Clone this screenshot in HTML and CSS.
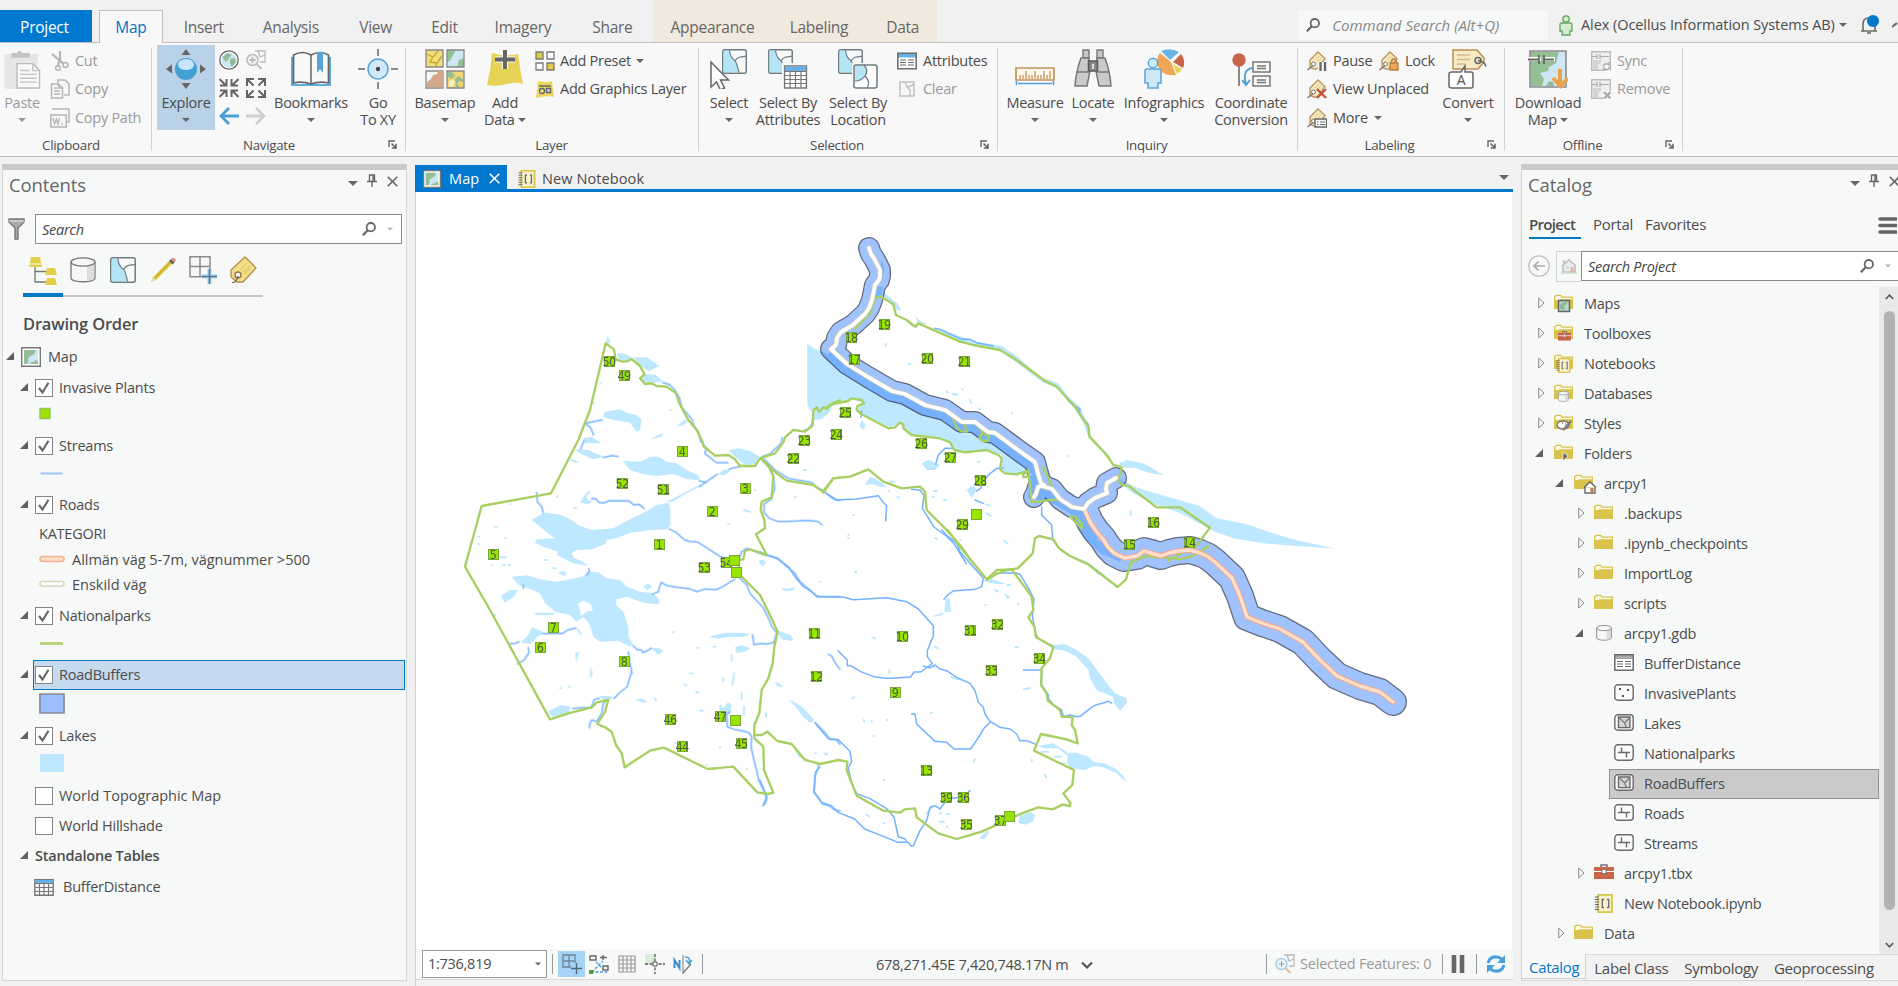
FILE: index.html
```html
<!DOCTYPE html>
<html lang="en">
<head>
<meta charset="utf-8">
<title>Map</title>
<link rel="stylesheet" href="styles.css">
</head>
<body>
<svg class="defs" aria-hidden="true">
  <symbol id="caret" viewBox="0 0 8 4"><path d="M0 0h8L4 4z" fill="currentColor"/></symbol>
  <symbol id="open" viewBox="0 0 8 8"><path d="M8 0v8H0z" fill="#5f5f5f"/></symbol>
  <symbol id="closed" viewBox="0 0 7 12"><path d="M.7 1v10L6 6z" fill="none" stroke="#8c8c8c"/></symbol>
  <symbol id="pin" viewBox="0 0 10 13"><path d="M2 1h6M2.500 1v6M7.500 1v6M6 1v6M0 7.500h10M5 8v5" fill="none" stroke="#666" stroke-width="1.400"/></symbol>
  <symbol id="close" viewBox="0 0 11 11"><path d="M.7.7l9.600 9.600M10.300.7L.7 10.300" fill="none" stroke="currentColor" stroke-width="1.600"/></symbol>
  <symbol id="mag" viewBox="0 0 14 14"><circle cx="8.800" cy="5.200" r="4.200" fill="none" stroke="#666" stroke-width="1.800"/><path d="M5.800 8.200L.8 13.200" stroke="#666" stroke-width="2.200"/></symbol>
  <symbol id="launch" viewBox="0 0 9 9"><path d="M1 7V1h6" fill="none" stroke="#666" stroke-width="1.400"/><path d="M3.500 3.500l4 4M8 3.800V8H3.800" fill="none" stroke="#666" stroke-width="1.600"/></symbol>
  <symbol id="folder" viewBox="0 0 19 16"><path d="M0 15V2.500L2 .7h5l1.500 1.800H19V15z" fill="#d9c34a"/><path d="M1.300 4.500V3l1.200-1h3.800l1.500 1.800h10v1.400H5.500L4.500 6H1.300z" fill="#fbf8e6"/></symbol>
  <symbol id="mapicon" viewBox="0 0 20 20"><path d="M.7.7h18.600v18.600H.7z" fill="#fff" stroke="#777" stroke-width="1.400"/><path d="M3 3h14v14H3z" fill="#cfe6f5"/><path d="M3 3h11.500l-1 4-3 1.500-3.500 2.500.5 3-1 3H3z" fill="#93bf95"/><path d="M8.500 17l2-2h3l.5-2 3 1v3z" fill="#93bf95"/></symbol>
  <symbol id="cyl" viewBox="0 0 26 26"><path d="M1 5v16c0 5 24 5 24 0V5" fill="#f7f7f7" stroke="#777" stroke-width="1.300"/><path d="M17 9v15c4-.5 7.300-1.500 7.300-3V5.500C24 7.500 20 8.500 17 9z" fill="#dcdcdc"/><ellipse cx="13" cy="5" rx="12" ry="4.200" fill="#f7f7f7" stroke="#777" stroke-width="1.300"/></symbol>
  <symbol id="poly" viewBox="0 0 26 26"><rect x=".8" y=".8" width="24.400" height="24.400" rx="2" fill="#f8f8f8" stroke="#6c7b80" stroke-width="1.500"/><path d="M1.700 1.700h6c1 4 .5 7 6 11 2 3 3 8 4 11.600h-16z" fill="#b3e5f7"/><path d="M7.700 1.500c1 4 .5 7 6 11 2 3 3 8 4 12M13.500 12.500C16 8 20 8 25 7.500" fill="none" stroke="#6c7b80" stroke-width="1.200"/></symbol>
  <symbol id="table" viewBox="0 0 24 24"><path d="M1 1h22v22H1z" fill="#fff" stroke="#777" stroke-width="1.600"/><path d="M1.500 1.500h21V6h-21z" fill="#69b1e2"/><path d="M1 6.500h22M1 10.500h22M1 14.500h22M1 18.500h22M6.500 6v17M12 6v17M17.500 6v17" stroke="#777" stroke-width="1.200"/></symbol>
  <symbol id="list" viewBox="0 0 20 17"><path d="M1 1h18v15H1z" fill="#fff"/><path d="M1 1h18v4H1z" class="head"/><path d="M.8.8h18.400v15.400H.8z" fill="none" stroke="#6b6b6b" stroke-width="1.500"/><path d="M3 7.500h6M3 10h6M3 12.500h6M11 7.500h6M11 10h6M11 12.500h6" stroke="#6b6b6b" stroke-width="1.200"/></symbol>
  <symbol id="fc" viewBox="0 0 20 17"><rect x=".8" y=".8" width="18.400" height="15.400" rx="3" fill="#fafafa" stroke="#6b6b6b" stroke-width="1.400"/></symbol>
  <symbol id="fcline" viewBox="0 0 20 17"><use href="#fc"/><path d="M4 8.500h12M7.500 3.500v5M12.500 8.500v5" fill="none" stroke="#6b6b6b" stroke-width="1.400"/></symbol>
  <symbol id="fcpoly" viewBox="0 0 20 17"><use href="#fc"/><path d="M4.500 3h11.500v10.700H4.500z" fill="#d5d5d5" stroke="#666" stroke-width="1.300"/><path d="M5.500 4l5 5 5-5M10.500 9l2 4.500" fill="none" stroke="#777" stroke-width="1.200"/></symbol>
  <symbol id="notebook" viewBox="0 0 18 19"><path d="M3 .8h14v17.400H3z" fill="#f8f0cc" stroke="#d9c34a" stroke-width="1.800"/><path d="M0 3h4M0 5.500h4M0 8h4M0 10.500h4M0 13h4M0 15.500h4" stroke="#666" stroke-width="1"/><path d="M9 5.500H7.300v8H9M12 5.500h1.700v8H12" fill="none" stroke="#666" stroke-width="1.300"/></symbol>
  <symbol id="toolbox" viewBox="0 0 20 16"><path d="M7 3V1h6v2" fill="none" stroke="#777" stroke-width="1.600"/><path d="M0 3h20v12H0z" fill="#c8644a"/><path d="M0 7.500h20" stroke="#fff"/><path d="M8 5.500h4v4H8z" fill="#fff" stroke="#777"/></symbol>
  <symbol id="check" viewBox="0 0 12 12"><path d="M1 6l3.500 4.500L10.500.8" fill="none" stroke="#666" stroke-width="2.100"/></symbol>
  <symbol id="tag" viewBox="0 0 20 20"><path d="M3 16.500V9L11 1l7 6.500-6 8.500-3.500 2.500z" fill="#f5e8bd" stroke="#bd9663" stroke-width="1.400"/><path d="M8.500 8.500l4-3.500M10 11l4-4" stroke="#dcc687"/><circle cx="6.500" cy="13" r="2" fill="#fff" stroke="#777"/><path d="M6 14.500L.5 19" stroke="#777" stroke-width="1.300"/></symbol>
  <symbol id="offmap" viewBox="0 0 20 20"><path d="M.7.7h18.600v18.600H.7z" fill="#eee" stroke="#bcbcbc" stroke-width="1.400"/><path d="M2 9h8v3l-3 2v4H2z" fill="#d4d4d4"/><path d="M0 5.500h6M6 3v5M9 3v5M9 5.500h9" fill="none" stroke="#aaa" stroke-width="1.200"/></symbol>
  <path id="road-north" d="M869 248l2 6 4 6 5 10v6l-1 4-4 5-3 15-3 8-4 6-12 11-12 7-4 6-1 7-5 4 16 15 21 13 24 14 13 3 20 11 20 5 17 12h13l13 10 7 1 23 17 17 12 4 15 3 9 10 3 8 10 12 8 12 2 4-6 7-5 12-5-1-4 1-6 9-5M1044 485l-6 2-2 7-2 3"/>
  <path id="road-main" d="M1085 511l5 11 6 9 7 8 5 8 6 6 10 5 13-2 7-5 7 2 10 3 8-3 9-2 12-1 10 3 7 3 8 6 17 16 8 18 7 21 15 6 18 6 23 13 17 18 17 16 23 10 20 6 13 10"/>
</svg>

<header class="tabs">
  <div class="tab project">Project</div>
  <div class="tab active">Map</div>
  <div class="tab w82">Insert</div><div class="tab w92">Analysis</div><div class="tab w78">View</div><div class="tab w60">Edit</div><div class="tab w97">Imagery</div><div class="tab w82">Share</div>
  <div class="context"><div class="tab w116">Appearance</div><div class="tab w100">Labeling</div><div class="tab w70">Data</div></div>
  <div class="command"><svg class="i14"><use href="#mag"/></svg><em>Command Search (Alt+Q)</em></div>
  <div class="account">
    <svg width="14" height="21" viewBox="0 0 14 21"><circle cx="7" cy="4" r="3.200" fill="#d5ecd0" stroke="#62a35f" stroke-width="1.300"/><path d="M1 9.500Q1 8 3 8h8q2 0 2 1.500V16h-2v4H3v-4H1z" fill="#d5ecd0" stroke="#62a35f" stroke-width="1.300"/></svg>
    <span>Alex (Ocellus Information Systems AB)</span><svg class="caret"><use href="#caret"/></svg>
    <svg class="bell" width="20" height="20" viewBox="0 0 20 20"><path d="M1 16h16M3 16V9q0-6 6-6t6 6v7M7 18h4" fill="none" stroke="#6a6a6a" stroke-width="1.600"/><circle cx="13" cy="6" r="6" fill="#0079c8"/></svg>
    <svg width="6" height="6" viewBox="0 0 6 6"><path d="M0 5l5-4" stroke="#666" stroke-width="2"/></svg>
  </div>
</header>

<section class="ribbon">
  <div class="group clipboard">
    <div class="body">
      <div class="big dim"><svg width="39" height="41" viewBox="0 0 39 41"><path d="M1 5h34v36H4q-3 0-3-3z" fill="#e6e6e6"/><path d="M8 4h6q2-5 5 0h8v5H8z" fill="#c4c4c4"/><path d="M14 15h16l7 7v18H14z" fill="#f8f8f8" stroke="#bdbdbd" stroke-width="1.500"/><path d="M30 15v7h7M17 22h10M17 26h17M17 30h17M17 34h17" fill="none" stroke="#c4c4c4" stroke-width="1.400"/></svg><b>Paste</b><svg class="caret"><use href="#caret"/></svg></div>
      <div class="rows dim">
        <div><svg class="i20" viewBox="0 0 20 20"><path d="M2 3l12 10M10 0v9L8 14" fill="none" stroke="#b5b5b5" stroke-width="2.200"/><circle cx="15.500" cy="14" r="2.500" fill="none" stroke="#b5b5b5" stroke-width="1.500"/><circle cx="8" cy="17" r="2.300" fill="none" stroke="#b5b5b5" stroke-width="1.500"/></svg>Cut</div>
        <div><svg class="i20" viewBox="0 0 20 20"><path d="M8 4V1h7l4 4v11h-5M1.500 5h7l4 4v10h-11z" fill="#f8f8f8" stroke="#b5b5b5" stroke-width="1.500"/><path d="M8.500 5v4h4M4 9h3M4 12h6M4 15h6" fill="none" stroke="#b5b5b5" stroke-width="1.300"/></svg>Copy</div>
        <div><svg class="i20" viewBox="0 0 20 20"><path d="M2 1h17v13h-3M.8 7h15.400v12H.8z" fill="#f8f8f8" stroke="#b5b5b5" stroke-width="1.500"/><path d="M3 10l1.500 6L6.500 11l1.500 5L9.500 10M12 15v2" fill="none" stroke="#b5b5b5" stroke-width="1.300"/></svg>Copy Path</div>
      </div>
    </div>
    <footer>Clipboard</footer>
  </div>
  <div class="group navigate">
    <div class="body">
      <div class="big selected"><svg width="40" height="40" viewBox="0 0 40 40"><circle cx="20" cy="20" r="11" fill="#459fd5"/><ellipse cx="20" cy="15.500" rx="8" ry="5.500" fill="#c9e6f8"/><path d="M15.500 6L20 0l4.500 6zM15.500 34l4.500 6 4.500-6zM6 15.500L0 20l6 4.500zM34 15.500l6 4.500-6 4.500z" fill="#666"/></svg><b>Explore</b><svg class="caret"><use href="#caret"/></svg></div>
      <div class="navgrid">
        <svg class="i20" viewBox="0 0 20 20"><circle cx="10" cy="10" r="9.200" fill="#fff" stroke="#666" stroke-width="1.300"/><circle cx="10" cy="10" r="7.500" fill="#cfe6f2"/><path d="M3.500 7l5-4 4 2-3 4-3 3zM11 9l5-1 1 4-4 5-2-4z" fill="#8fbc96"/></svg>
        <svg class="i20" viewBox="0 0 20 20"><path d="M9 1h10v11h-5M12 1l2 6 5-2" fill="none" stroke="#bbb" stroke-width="1.300"/><circle cx="6.500" cy="10" r="5.500" fill="#f2f2f2" stroke="#bbb" stroke-width="1.500"/><path d="M3.500 10h6M6.500 7v6M10.500 14l5 5" stroke="#bbb" stroke-width="1.800"/></svg>
        <svg class="i20" viewBox="0 0 20 20"><path d="M.5 1l6 6M7.500 1v6.500H1M19.500 1l-6 6M12.500 1v6.500H19M.5 19l6-6M7.500 19v-6.500H1M19.500 19l-6-6M12.500 19v-6.500H19" fill="none" stroke="#666" stroke-width="2"/></svg>
        <svg class="i20" viewBox="0 0 20 20"><path d="M1.500 1.500l6 6M1 8V1h7M18.500 1.500l-6 6M12 1h7v7M1.500 18.500l6-6M1 12v7h7M18.500 18.500l-6-6M12 19h7v-7" fill="none" stroke="#666" stroke-width="2"/></svg>
        <svg class="i20" viewBox="0 0 20 20"><path d="M2 10h18M10 2L2 10l8 8" fill="none" stroke="#4b9fd8" stroke-width="2.800"/></svg>
        <svg class="i20" viewBox="0 0 20 20"><path d="M0 10h18M10 2l8 8-8 8" fill="none" stroke="#cfcfcf" stroke-width="2.800"/></svg>
      </div>
      <div class="big w80"><svg width="40" height="40" viewBox="0 0 40 40"><path d="M1 8v28h38V8" fill="none" stroke="#5aaee0" stroke-width="2"/><path d="M2.500 6q9-5 17.500 0 9-5 17.500 0v28q-9-2-17.500 1-9-3-17.500-1z" fill="#f8f8f8" stroke="#666" stroke-width="1.700"/><path d="M20 6v29" stroke="#666" stroke-width="1.500"/><path d="M26 3h6v21l-3-4-3 4z" fill="#56a5da"/></svg><b>Bookmarks</b><svg class="caret"><use href="#caret"/></svg></div>
      <div class="big w54"><svg width="40" height="40" viewBox="0 0 40 40"><circle cx="20" cy="20" r="10" fill="#cfe9fa" stroke="#56a5da" stroke-width="1.500"/><circle cx="20" cy="20" r="2.200" fill="#444"/><path d="M20 0v7M20 33v7M0 20h7M33 20h7" stroke="#666" stroke-width="1.500"/></svg><b>Go<br>To XY</b></div>
    </div>
    <footer>Navigate<svg class="launch"><use href="#launch"/></svg></footer>
  </div>
  <div class="group layer">
    <div class="body">
      <div class="big w70"><svg width="40" height="40" viewBox="0 0 40 40"><path d="M1 1h17v17H1z" fill="#efdf76" stroke="#888" stroke-width="1.300"/><path d="M2 5l6 3 5-6M8 8l-3 5 7 1 5-7M12 14l-1 3" fill="none" stroke="#c9a43c" stroke-width="1.300"/><path d="M22 1h17v17H22z" fill="#cfe6f5"/><path d="M22 1h9l-4 7-2 4-3 1zM39 9l-5 2-2 7h7z" fill="#93bf95"/><path d="M22 1h17v17H22zM1 22h17v17H1z" fill="none" stroke="#888" stroke-width="1.300"/><path d="M2 38V33l4-3 2-4 4-1 1-3h5v16z" fill="#d3a98a"/><path d="M22 22h17v17H22z" fill="#f1d573" stroke="#888" stroke-width="1.300"/><path d="M23 23h4l3 4-4 3-3-2zM30 30l3-3 5 3v3l-4-1-2 3 3 3h-4z" fill="#93bf95"/><path d="M24 33l4-3 2 4-3 4-3-1z" fill="#f7f0c4"/></svg><b>Basemap</b><svg class="caret"><use href="#caret"/></svg></div>
      <div class="big w50"><svg width="40" height="40" viewBox="0 0 40 40"><path d="M7 4q13 4 26 1 2 15 5 30-5-2-12-1-12 4-24 2 4-16 5-32z" fill="#e6d254"/><path d="M20 0v20M10 10.500h20" stroke="#f8f8f8" stroke-width="6"/><path d="M20 1v19M10 10.500h20" stroke="#666" stroke-width="4"/></svg><b>Add<br>Data <svg class="caret"><use href="#caret"/></svg></b></div>
      <div class="rows">
        <div><svg class="i20" viewBox="0 0 20 20"><path d="M1 1h7v7H1zM12 12h7v7h-7z" fill="#e3ca45" stroke="#777" stroke-width="1.300"/><path d="M12 1h7v7h-7zM1 12h7v7H1z" fill="#fff" stroke="#777" stroke-width="1.300"/></svg>Add Preset <svg class="caret"><use href="#caret"/></svg></div>
        <div><svg class="i20" viewBox="0 0 20 20"><path d="M3 2q7 2 14 0l2 16q-9-2-18 1z" fill="#ead860"/><path d="M4 7h12M11.500 9.500h4v4h-4z" fill="#ddd" stroke="#666" stroke-width="1.500"/><circle cx="7" cy="12" r="2.500" fill="#efe28a" stroke="#666" stroke-width="1.300"/></svg>Add Graphics Layer</div>
      </div>
    </div>
    <footer>Layer</footer>
  </div>
  <div class="group selection">
    <div class="body">
      <div class="big w56"><svg width="40" height="40" viewBox="0 0 40 40"><g transform="translate(13 0)"><use href="#poly" width="25" height="25"/></g><path d="M2 13v25l5.500-5 4 8 4-2-4-8h8z" fill="#fff" stroke="#666" stroke-width="1.500"/></svg><b>Select</b><svg class="caret"><use href="#caret"/></svg></div>
      <div class="big w62"><svg width="40" height="40" viewBox="0 0 40 40"><use href="#poly" width="25" height="25"/><path d="M14 14h26v26H14z" fill="#f8f8f8"/><use href="#table" x="15.500" y="16" width="24" height="24"/></svg><b>Select By<br>Attributes</b></div>
      <div class="big w78"><svg width="40" height="40" viewBox="0 0 40 40"><use href="#poly" width="25" height="25"/><path d="M14 14h26v26H14z" fill="#f8f8f8"/><rect x="16" y="16" width="23" height="23" rx="2" fill="#fff" stroke="#6c7b80" stroke-width="1.500"/><path d="M17 17h9q5 6 1 10-2 4-6 5H17z" fill="#b3e5f7"/><path d="M26 16q5 6 1 11-4 5-10 5M27 27q6 6 2 12" fill="none" stroke="#6c7b80" stroke-width="1.200"/></svg><b>Select By<br>Location</b></div>
      <div class="rows">
        <div><svg class="i20 blue"><use href="#list"/></svg>Attributes</div>
        <div class="dim"><svg class="i20" viewBox="0 0 20 20"><path d="M3 3h14v14H3zM8 3l2 5 3 3v6M10 9l7-4" fill="none" stroke="#c0c0c0" stroke-width="1.500"/></svg>Clear</div>
      </div>
    </div>
    <footer>Selection<svg class="launch"><use href="#launch"/></svg></footer>
  </div>
  <div class="group inquiry">
    <div class="body">
      <div class="big w60"><svg width="40" height="40" viewBox="0 0 40 40"><path d="M1 19h38v12H1z" fill="#fff8ec" stroke="#c1925a" stroke-width="1.700"/><path d="M5 30v-4M8 30v-4M11 30v-8M14 30v-4M17 30v-4M20 30v-8M23 30v-4M26 30v-4M29 30v-8M32 30v-4M35 30v-8" stroke="#c1925a" stroke-width="1.300"/><path d="M1.500 32v4M38.500 32v4M3 34.500h34" stroke="#4f9fd5" stroke-width="1.500"/></svg><b>Measure</b><svg class="caret"><use href="#caret"/></svg></div>
      <div class="big w56"><svg width="40" height="40" viewBox="0 0 40 40"><path d="M10 1h6v8h-6zM24 1h6v8h-6z" fill="#c7c7c7" stroke="#777" stroke-width="1.400"/><path d="M8 9h8l1 13-3 15H2q1-15 6-28zM32 9h-8l-1 13 3 15h12q-1-15-6-28z" fill="#cacaca" stroke="#777" stroke-width="1.500"/><path d="M15.500 12h9v10h-9z" fill="#888" stroke="#555" stroke-width="1.500"/><path d="M19 15h2v5h-2z" fill="#ddd"/><path d="M4 23h12M24 23h12" stroke="#777" stroke-width="1.500"/></svg><b>Locate</b><svg class="caret"><use href="#caret"/></svg></div>
      <div class="big w86"><svg width="40" height="40" viewBox="0 0 40 40"><path d="M27 13L16 4q-4 5-3 12 5 12 19 10z" fill="#f0a657"/><path d="M26 11L17 2q9-4 18 1z" fill="#69b4e4"/><path d="M29 13l8-8q5 6 2 14z" fill="#c8644a"/><path d="M29 15l9 5q-2 4-5 5z" fill="#e6d254"/><circle cx="9" cy="14" r="4.700" fill="#cfe9fa" stroke="#56a5da" stroke-width="1.500"/><path d="M1 22q0-2 2-2h12q2 0 2 2v12h-3v5H4v-5H1z" fill="#cfe9fa" stroke="#56a5da" stroke-width="1.500"/></svg><b>Infographics</b><svg class="caret"><use href="#caret"/></svg></div>
      <div class="big w88"><svg width="40" height="40" viewBox="0 0 40 40"><path d="M8 12v25" stroke="#777" stroke-width="1.700"/><circle cx="8" cy="11" r="6.700" fill="#c8644a"/><path d="M22 13h17v10H22zM22 27h17v10H22zM26 17h9M26 19.500h9M26 31h9M26 33.500h9" fill="none" stroke="#777" stroke-width="1.500"/><path d="M21 19q-10 2-6 16M11 31l4 5 4-5" fill="none" stroke="#4b9fd8" stroke-width="1.800"/></svg><b>Coordinate<br>Conversion</b></div>
    </div>
    <footer>Inquiry</footer>
  </div>
  <div class="group labeling">
    <div class="body">
      <div class="rows">
        <div><svg class="i20" viewBox="0 0 20 20"><use href="#tag"/><path d="M13.500 11v9M18 11v9" stroke="#f8f8f8" stroke-width="5"/><path d="M13.500 11v9M18 11v9" stroke="#666" stroke-width="2.300"/></svg><span class="pause">Pause</span><svg class="i20" viewBox="0 0 20 20"><use href="#tag"/><path d="M11 12h8v7h-8z" fill="#edaa5b" stroke="#b87b3b" stroke-width="1.300"/><path d="M12.500 12q0-4 2.500-4t2.500 4" fill="none" stroke="#b87b3b" stroke-width="1.500"/></svg>Lock</div>
        <div><svg class="i20" viewBox="0 0 20 20"><use href="#tag"/><path d="M10 10l9 9M19 10l-9 9" stroke="#c8533a" stroke-width="2.400"/></svg>View Unplaced</div>
        <div><svg class="i20" viewBox="0 0 20 20"><use href="#tag"/><path d="M8 11h11.500v8H8z" fill="#fff" stroke="#666" stroke-width="1.400"/><path d="M10 14h1.500M13 14h5M10 16.500h1.500M13 16.500h5" stroke="#666" stroke-width="1.200"/></svg>More <svg class="caret"><use href="#caret"/></svg></div>
      </div>
      <div class="big w60"><svg width="40" height="40" viewBox="0 0 40 40"><path d="M5 1h24l7 8v4l-6 7H5z" fill="#f6ebc4" stroke="#b98f56" stroke-width="1.500"/><path d="M9 6h13M9 10.500h13M9 15h8" stroke="#d5b98b" stroke-width="1.300"/><circle cx="30" cy="11.500" r="3" fill="#f6ebc4" stroke="#666" stroke-width="1.500"/><path d="M30 11.500q7 1 8 6" fill="none" stroke="#666" stroke-width="1.500"/><path d="M4 23h9l4-6v6h6q2 0 2 2v12q0 2-2 2H4q-3 0-3-2V25q0-2 3-2z" fill="#fff" stroke="#666" stroke-width="1.500"/><text x="13" y="35.500" text-anchor="middle" class="glyph">A</text></svg><b>Convert</b><svg class="caret"><use href="#caret"/></svg></div>
    </div>
    <footer>Labeling<svg class="launch"><use href="#launch"/></svg></footer>
  </div>
  <div class="group offline">
    <div class="body">
      <div class="big w76"><svg width="40" height="40" viewBox="0 0 40 40"><path d="M2 2h36v36H2z" fill="#cfe6f5" stroke="#8a8a8a" stroke-width="1.600"/><path d="M3 3h28l-3 11-7 4-1 4-8 2 4 6-2 7H3z" fill="#93bf95"/><path d="M18 37l3-5 4 1 1 4z" fill="#93bf95"/><path d="M0 10h13M16 10h11" stroke="#fff" stroke-width="4"/><path d="M0 10.500h11M11 6v9M16 6v9M16 10.500h10" stroke="#666" stroke-width="1.800"/><path d="M32 20v16M25 29l7.500 8 7.500-8" fill="none" stroke="#e9a14c" stroke-width="4"/></svg><b>Download<br>Map <svg class="caret"><use href="#caret"/></svg></b></div>
      <div class="rows dim">
        <div><svg class="i20" viewBox="0 0 20 20"><use href="#offmap"/><path d="M12 12h7v8h-7z" fill="#f8f8f8"/><path d="M12 15q3-4 6-1v-3M19 16q-3 5-6 1v3" fill="none" stroke="#aaa" stroke-width="1.500"/></svg>Sync</div>
        <div><svg class="i20" viewBox="0 0 20 20"><use href="#offmap"/><path d="M12 12h8v8h-8z" fill="#f8f8f8"/><path d="M13 13l6.500 6.500M19.500 13L13 19.500" stroke="#aaa" stroke-width="2.300"/></svg>Remove</div>
      </div>
    </div>
    <footer>Offline<svg class="launch"><use href="#launch"/></svg></footer>
  </div>
</section>

<main>
  <aside class="pane contents">
    <div class="title"><h1>Contents</h1><svg class="drop"><use href="#caret"/></svg><svg class="pin"><use href="#pin"/></svg><svg class="x"><use href="#close"/></svg></div>
    <div class="find">
      <svg width="17" height="22" viewBox="0 0 17 22"><path d="M1 1h15v3l-6 6v11H7V10L1 4z" fill="#aaa" stroke="#777" stroke-width="1.400"/><path d="M1 3h15" stroke="#eee"/></svg>
      <div class="box"><em>Search</em><svg class="i14"><use href="#mag"/></svg><svg class="caret pale"><use href="#caret"/></svg></div>
    </div>
    <div class="views">
      <div class="on"><svg width="28" height="28" viewBox="0 0 28 28"><path d="M6 10v15h12M6 14.500h12" fill="none" stroke="#777" stroke-width="1.300"/><path d="M2 0h9l2 10H0zM18 11h8l2 7H16zM18 21h8l2 7H16z" fill="#e3cf48"/><path d="M0 7h12" stroke="#f7f9f8"/></svg></div>
      <div><svg width="26" height="26"><use href="#cyl"/></svg></div>
      <div><svg width="26" height="26"><use href="#poly"/></svg></div>
      <div><svg width="26" height="26" viewBox="0 0 26 26"><path d="M1 25l2-5L20 3l3 3L6 23z" fill="#e0c83f"/><path d="M5 21L21 4.500" stroke="#b39b3c"/><path d="M1 25l2-5 3 3z" fill="#e9d7b5"/><path d="M19 4l2-2 4 3-2.500 2.500z" fill="#666"/><path d="M21 2q3-3 5 1l-1.500 2.500z" fill="#dc9a86"/></svg></div>
      <div><svg width="28" height="28" viewBox="0 0 28 28"><path d="M1 0.700h20v20H1zM11 0v20M1 10.500h20" fill="none" stroke="#8b8b8b" stroke-width="1.500"/><path d="M13 13h16v16H13z" fill="#f7f9f8"/><path d="M20.500 13v15M13 20.500h15" stroke="#9fd2f2" stroke-width="4"/><path d="M20.500 13v15M13 20.500h15" stroke="#5e7383" stroke-width="1.500"/></svg></div>
      <div><svg width="27" height="27" viewBox="0 0 27 27"><path d="M1 14L15 1l11 11-13 14H7l-6-5z" fill="#f1df89" stroke="#b98c4c" stroke-width="1.300"/><path d="M10 14l7-7M13 16l7-6M14 18l6-5" stroke="#d5b457"/><circle cx="8" cy="19" r="3" fill="#f7f9f8" stroke="#a0744a" stroke-width="1.500"/><path d="M8 20q-1 6-6 7" fill="none" stroke="#666" stroke-width="1.300"/></svg></div>
    </div>
    <h2>Drawing Order</h2>
    <div class="toc">
      <div class="l0 h32"><svg class="i8"><use href="#open"/></svg><svg class="i20"><use href="#mapicon"/></svg>Map</div>
      <div class="l1"><svg class="i8"><use href="#open"/></svg><i><svg><use href="#check"/></svg></i>Invasive Plants</div>
      <div class="sym s1"><svg width="26" height="14" viewBox="0 0 26 14"><path d="M4 1.500h10v10H4z" fill="#98e600" stroke="#9bbf55" stroke-width="1.400"/></svg></div>
      <div class="l1"><svg class="i8"><use href="#open"/></svg><i><svg><use href="#check"/></svg></i>Streams</div>
      <div class="sym s2"><svg width="26" height="14" viewBox="0 0 26 14"><path d="M1.500 7.500h22" stroke="#9cc3fb" stroke-width="2"/></svg></div>
      <div class="l1"><svg class="i8"><use href="#open"/></svg><i><svg><use href="#check"/></svg></i>Roads</div>
      <div class="sym h28">KATEGORI</div>
      <div class="sym h24 loose"><svg width="26" height="14" viewBox="0 0 26 14"><rect x="1" y="3.500" width="24" height="5" rx="2.500" fill="#ffdcc4" stroke="#f2b296" stroke-width="1.600"/></svg><span>Allmän väg 5-7m, vägnummer &gt;500</span></div>
      <div class="sym h26 loose"><svg width="26" height="14" viewBox="0 0 26 14"><rect x="1" y="3.500" width="24" height="4.500" rx="2.300" fill="#fff" stroke="#d6d5b9" stroke-width="1.600"/></svg><span>Enskild väg</span></div>
      <div class="l1 gap3"><svg class="i8"><use href="#open"/></svg><i><svg><use href="#check"/></svg></i>Nationalparks</div>
      <div class="sym s2"><svg width="26" height="14" viewBox="0 0 26 14"><path d="M1 7.500h23" stroke="#b0d06c" stroke-width="2.600"/></svg></div>
      <div class="l1 picked"><svg class="i8"><use href="#open"/></svg><i><svg><use href="#check"/></svg></i>RoadBuffers</div>
      <div class="sym s3"><svg width="26" height="21" viewBox="0 0 26 21"><path d="M1 1h24v19H1z" fill="#9cbffb" stroke="#858b98" stroke-width="1.700"/></svg></div>
      <div class="l1"><svg class="i8"><use href="#open"/></svg><i><svg><use href="#check"/></svg></i>Lakes</div>
      <div class="sym s4"><svg width="26" height="20" viewBox="0 0 26 20"><path d="M1 1h24v18H1z" fill="#bee8ff"/></svg></div>
      <div class="l1 loose"><u></u><i></i>World Topographic Map</div>
      <div class="l1"><u></u><i></i>World Hillshade</div>
      <div class="l1 semi"><svg class="i8"><use href="#open"/></svg>Standalone Tables</div>
      <div class="l2"><svg width="20" height="17" viewBox="0 0 20 17"><path d="M.8.8h18.400v15.400H.8z" fill="#fff" stroke="#777" stroke-width="1.400"/><path d="M1 1h18v3H1z" fill="#69b1e2"/><path d="M1 4.500h18M1 8.500h18M1 12.500h18M5.500 4.500v12M10 4.500v12M14.500 4.500v12" stroke="#777" stroke-width="1.200"/></svg>BufferDistance</div>
    </div>
  </aside>

  <section class="view">
    <nav>
      <div class="doc on"><svg class="i18"><use href="#mapicon"/></svg>Map<svg class="x"><use href="#close"/></svg></div>
      <div class="doc"><svg class="i18"><use href="#notebook"/></svg>New Notebook</div>
      <svg class="drop"><use href="#caret"/></svg>
    </nav>
    <svg class="map" width="1096" height="757" viewBox="416 192 1096 757">
      <g class="buffer">
        <use href="#road-north" class="edge"/>
        <use href="#road-main" class="edge wide"/>
        <use href="#road-north" class="fill"/>
        <use href="#road-main" class="fill wide"/>
      </g>
      <g class="lakes">
        <g transform="translate(440 320) scale(.33333)">
          <path d="M275 600L310 578 355 583 385 595 420 618 455 630 520 625 560 603 610 578 650 555 685 548 690 560 692 615 680 628 630 630 570 638 530 655 500 660 495 672 455 688 410 690 395 700 402 715 430 725 445 738 400 730 375 718 350 705 355 695 310 680 285 668 290 658 345 655 330 645 300 620z"/>
          <path fill-rule="evenodd" d="M215 770L260 766 300 778 350 785 390 778 425 770 445 755 475 757 500 775 540 780 560 800 600 815 640 820 658 840 655 853 610 848 560 830 530 838 528 855 550 875 565 920 565 950 580 975 570 980 535 962 480 965 460 950 450 915 430 890 410 905 390 885 345 875 315 850 300 820 265 805 235 795zM413 852l17-10 22 10 6 20-18 2-17 14-3-18z"/>
          <path d="M548 422L600 425 630 410 655 410 680 425 710 430 740 450 775 465 778 480 740 478 700 462 655 468 610 463 570 450zM488 290L495 275 540 268 560 278 590 285 605 300 600 330 590 335 570 308 520 300zM865 392L895 385 930 393 958 410 945 432 915 435 890 415z"/>
          <path d="M503 45l9 24-15 3zM532 98l28 5 15 10-15 12-25-7zM580 112l40 0 38 25-30 17-25-15zM612 162l35 2 23 20-45 8-20-12zM430 355l25-5 30 20-50 0zM405 388l40 2 45 20-30 8-45-20zM635 355l35-17-5 12-30 8zM710 318l25-20 8 5-15 14zM390 415l20 8 5 7-22-6zM785 497l-45 23-45 27-15-2 55-28 45-24zM835 462l15-12 22-3-5 10-17 10zM425 538l22-28 2 10-10 8 5 12 15 5-18 8-20-5zM183 828l27-18 22 0-10 20-28 18zM610 800l15-10 12 10-15 10zM285 878l60 0-5 7-55 0zM275 922l30 12 5 8-18 8-20 22-30-5 22-20zM805 950l50-12 50 0 25 5-20 8-50 0-25 5zM885 982l20-6 25 8-10 10-30 5zM635 985l20-2 16 10-16 12zM1010 930l40 15 8 12-3 7-30-7zM322 1175l40-20 30 5-5 20-50 10zM478 1128l30 0 15 6-30 8zM1102 72l20 18 50 20 28 5v130l-28 15-22 28-30-5-18-25zM840 1150l10 15 15-20 10 10-5 25-20 5-12-15zM583 1136l25 0 12 10-10 3zM405 1000l12-5-8 35zM450 1040l8 15-3 20-5-5zM1048 1140l40 22 35 38-15 8-30-35zM355 760l12-8 15 8-8 9zM1070 1295l25 20 20 8-30-8zM1150 1297l15 3-5 8zM730 1090l15 5-10 5zM765 1112l15 3-10 8zM775 1168l18 3-8 8zM745 1055l18 5-8 5zM955 722l15-3 8 10-12 10z"/>
          <path class="specks" d="M165 620h6M115 650h2M195 655h3M115 672h3M182 712h16M205 735h6M155 735h1M190 735h4M210 552h1M350 530h2M402 565h6M315 720h7M340 745h8M160 885h6M875 1005v18M882 1060l-5 35M905 1120v18M850 1075v8M912 1160v25M840 1280v3M920 1345v3M800 1335h2M700 935v3M772 983h3M645 1135l3 8M360 1105h3M387 1100h2M413 928l10 15M912 570l18 5M865 612h2M1030 808l15 1 15-4M945 510h1M660 510h1M1010 1090l5 8M577 1060h2M480 190h1M460 250h1M690 270h2M705 1270h2M820 980h6"/>
        </g>
        <g transform="translate(760 220) scale(.33333)">
          <path d="M142 372L165 387 205 402 230 388 265 430 330 470 400 512 440 520 500 555 560 568 610 605 650 605 690 635 710 637 780 690 825 740 825 770 805 752 770 763 735 757 722 740 725 705 680 690 615 695 583 688 570 665 540 652 455 642 430 625 420 608 390 622 305 583 290 565 312 550 275 538 220 552 208 578 185 598 160 600 155 570 142 540z"/>
          <path d="M372 215l15 15 25 20 12 24-22-14-30-25zM365 120l8 25-3 20-6 20-10 5 3-35zM340 235l10-35 20 0-5 25zM465 290l20 15 20 8-30-2zM525 325L605 350 650 365 725 378 770 408 840 470 895 490 925 530 960 560 985 620 995 650 1050 710 1060 738 1040 710 985 650 970 610 940 560 890 503 850 488 770 428 720 392 640 377 600 367zM1080 728l20-8 50 10 35 20 25 16-45-8-40-15-45 0zM485 730l20-10 35 15-15 15-25 0zM730 710l20-10 30 15 20 33-25 5-35-20zM305 600l12 15-7 15-12-12zM620 810l20-15 10 15-15 25zM670 850l25 5-10 5zM330 770l20 8 30 22-20 0-20-8-25 3zM805 770l30-10 15 35 60 50 60 20 45 95 75 50-10 15-60-25-50-50-40-70-60-35-65-10z"/>
          <path class="specks" d="M410 265l8 5M377 372v6M447 430l4 3M560 515l3 2M578 522l15 2M606 508h2M630 540l3 8M657 565l3 3M755 580h1M555 595h2M552 840h6M385 812l3 3M412 830l5 3M522 813h8M732 962l10 8M600 960h2M925 708h1M1112 875v10M1185 960h3M280 885h2M265 945h2M680 880l12 7M132 750h6M105 830h2M653 725h6M517 830h5M390 785h12"/>
        </g>
        <g transform="translate(760 530) scale(.33333)">
          <path d="M828 322L880 345 915 342 950 360 985 385 1015 425 1040 460 1065 490 1100 505 1100 520 1080 542 1062 520 1058 500 1010 480 990 445 985 420 950 380 915 362 880 358zM925 668L950 668 985 680 1000 695 1030 700 1065 715 1090 738 1100 758 1070 730 1030 712 1000 708 975 720 930 715 920 695z"/>
          <path d="M0 90l15 5-5 15zM50 308l40 5 10 18-30-2zM557 208l12-3 4 40-20 0zM518 258l25-8 5-5v10l-25 5zM665 150l30-3 45 15-30 0-20-4zM733 190l18 10-10 8zM830 648l50-8 40 25 5 15-30-25-40 0zM778 858l32-12 15 8-5 20-25 10-20-5zM658 925l25-25 5 8-15 20zM90 508l30 20 40 45-5 5-25-15-15-25zM95 640l20 25 25 25-25-10zM190 668l15 3-8 6zM850 728l10 8 2 10-8-4zM315 850l12 5 4 8-8-2zM920 72l60 22 55 42-20-2-40-35zM735 30l10 10-5 3z"/>
          <path class="specks" d="M68 178l15 2 18-2M286 125l3 2M337 322l8 3M388 420v8M526 350l8 6M766 352h8M676 225h2M706 180l8 4M742 165h8M775 221v3M792 478l18-4M277 505l5-3M311 570l2 5M335 572v2M381 570h2M513 548h3M521 412h3M575 442l30 8M645 687l-3 8M815 690v4M371 750h2M500 850l15-18M540 850h4M560 852h6M540 875h12M560 890h2M371 880h2M845 665h20M885 680h18M903 700h12M52 460l12 9M18 550v10M166 670h2M264 25h2M526 24l4 3M180 155h2M340 618h1"/>
        </g>
        <path transform="scale(1.2105)" d="M920 394L940 403 960 409 991 418 1005 428 1030 433 1050 440 1070 446 1103 453 1070 451 1045 449 1020 445 1003 439 975 424 955 417 935 407z"/>
      </g>
      <g class="streams">
        <path transform="translate(440 320) scale(.33333)" d="M668 188l20 5 15 15 15 25 8 30 30 35 5 18 15 22 5 25 18 22-5 15 35 28h35M487 300l-28 5-25 5 17 12 10 23M432 362l-10 25M490 412l25-5 20 2M290 517l2 28 13 15 4 17M455 537l12-2 10 12 15 2 15-7 60 1 15 12 15-2 15 12M908 437l-40 10M832 462l-35 25-20-5M797 487l-18 13M688 627l20 10 25 22 15 5 25 2 70 45 30 8M895 715l5-5 5-15 15-10 60 22M637 823l18-8 8-28 18 10 35 5 35 5 20 8 22-8 35 2 22-10 35-22M900 775l20 20 10 25 20 22 20 22 15 30 10 25 15 18-8 30-20 5-20-2-20 4-5-30M970 415l15 15 5 20 10 15 4 40-10 32-22 15 0 25 15 17 25 10h30l60-3 30 3 14 10M975 420l30 30 40 25 70 12 15 15 20 10 30 25 20 5M965 410l25-8 20-20 12-10 5-20M1090 333l20-10 8-18 0-10M980 705l35 10 20 20 30 25 15 25 50 42 10 3h60M440 765l8-10-2-10M250 795v10M308 940h60l15-10 25-6M205 972l20-2 12-5M265 983l2 15-15 22-20 12M565 995l5 35 5 25-8 25-5 20-20 15-20 20M580 978l12 12h12l5 8 20-10 5-4M398 1165l30-2 25 0 10-25 15-3M500 1140l-10 10-5 30-15 25-15-5-6 12v12M870 1175l-10 10 2 35 20 8 20 3 25 7 8 12-2 30 10 45 8 30 5 25 15 30 10 25-5 15-8 8M1125 1208l30 30 15 20h18l12 15M1165 1003l10 5 10 20 15 20M1135 1332v10l-10 25-3 50 20 25 5 10 20 5 15 12 18 4"/>
        <path transform="translate(760 220) scale(.33333)" d="M525 325l20 5 60 28 25 0 20 10 50 10M440 300l15 15 15 5M915 528l15 20 30 20-2 15 27 30 3 20M305 572l-2 20M580 685l-25 0-20 20-8 28M730 745h-20l-25 20-15 20-8 20-12 8M645 840l25 10M195 818l35 22 60-3 65-10 15 20 10 10-3 45M455 808l25 3 12 15-5 40 10 15 25 40 40 30 20 20 25 40 12 20M845 860v25l30 30 3 45 30 35"/>
        <path transform="translate(760 530) scale(.33333)" d="M545 0l20 20 25 20 10 25 70 80-5 25-20 8-40 3-25 2-15 10-13 15M705 130l60-2 15 5 30 50 12 25-5 50 10 50 5 12M0 65l20 10 30 10 35 25 20 30 25 30 25 15 15 15 80 1 30 8 100-6 60 12 35 22 45 50v30l-18 45 0 18 15 20-10 8-25 18-20 0-10 15-55 4h-20l-35-5-40-15-30-18-10 0 0-17-28-28M490 408l20 5 15-8 15 12 20 5 30 20 40 18 15 22 10 35 15 15 5 20 15 22 30 18 30 5 20 15 10 20 20 0 30 12M455 552l10 0 5 30 55 52 35 3 22 20h50l28-42 12-20 20-20M790 420l55 0 0 45 20 30 0 10 15 20 25 15 5 20 20-5 20 5 10-1 35-27 15-8 20-5 15-5 10 5M165 578l40 48 30 3 35 35 5 30-10 20 10 45 15 32 40 15 50 30 22 25 13 60 20 5 5 10M180 712l-13 13-5 60 22 32 30 10 20 20 50 20 30 30 50 20 50 20 30 0 10 12 6-1 20-46 20-30 10-40 15-5 15 10 15-20M580 805l30-5 20-18M0 750l20 50-10 25"/>
      </g>
      <g class="parks">
        <path transform="translate(440 320) scale(.33333)" d="M497 70l25 18 5 30 20 7 15-1 13-7 25 21 13 25-13 12 15 17 20-2 15 8 30 2 28 20 10 30 27 50 25 30 18 35 2 13 35 29 40-2 20 13 15 20h45l15-23 45-15 25-33 5-15 25-22 35 5 23-18 2-45 10-10 7 13 13-13 10 5 10-13 30-13M497 70l-47 200-35 90-82 160-208 38-50 182 75 130 180 328 55-18 70-18 15-15 35-7-10 35-23 37 23 10 20 13 13 40 17 25 9 42 76-50 42-9 131 64 77-7 72 77 33 5 15-4-28-68-2-70-27-25v-40l15-35 7-70 20-35 13-45 5-50 10-45-23-50-30-60-60-60-5-45 15-2 5-25 15-5 50 17-32-62 27-18-2-25-11-30 3-25 30-13 5-62-10-25-25-27 45 42 30 22 80 13 28 20 32-40 20-3"/>
        <path transform="translate(760 220) scale(.33333)" d="M190 818l30-43 50-5 55-22 45 37 55 20 55-5 15 15 5 55 55 55 45 50 32 45M200 562l20-10 45-9 10-8 30 5 7 10-20 8-2 12 15 13 80 42 20-3 15-14 10 5v12l25 20 85 10 30 12 13 23 32 7 65-7 35 15 10 10-5 33 15 12 35 3 35-11 2 16-16 4-2-8 16-12 10 95 85-10-10-5-40-90M360 228l40 25 8 32 32 15 25 20 10-10 125 55 40 10 80 15 50 30 85 63 35 17 55 60 40 60 3 30 52 55 20 30 25 7-10 38 10 15 20 2 85 65h70l60 41 30 20-45 60-35 12-45 28M360 228l-15 8-15 44-45 45M580 600l12 25 15 10h15l-8-20M650 615l18 20-10 20 10 8h15l3-15-20-8M930 890l35 35v-15l-20-20zM838 948l-13 7-7 45-45 45-30 5-30 10-30 18M838 948l42 10 15 25 35 25 55 25 45 35 43 33 25-23 14-50 45-20 60 5 45 5 35-10 50-30"/>
        <path transform="translate(760 530) scale(.33333)" d="M563 0l37 50 80 98 30-28 45-2 60 82 5 40-15 22 18 28 5 32 52 28-10 35-25 30-2 50 17 25 3 22 37 28 5 20 33 2-3 23 10 15 8 40-33-12-77-16-21 50 120 58-5 45-27 25 22 30-2 8-22-4-30 14-43-6-50 18-65 30-55 25-75 22-55-17-65-48-5-27-30 3-15 10-50-6-80-45-30-77 2-25-27-5-55 12-45-12-40-48-43-9-30-28-17 10h-22"/>
      </g>
      <g class="roads">
        <use href="#road-main" class="casing main"/>
        <use href="#road-main" class="core main"/>
        <use href="#road-north" class="casing"/>
        <use href="#road-north" class="core"/>
      </g>
      <g id="plants"></g>
    </svg>
    <div class="status">
      <div class="scale">1:736,819<svg class="caret"><use href="#caret"/></svg></div>
      <hr>
      <div class="tool on"><svg class="i20" viewBox="0 0 20 20"><path d="M1 1h12v12H1zM7 1v12M1 7h12" fill="none" stroke="#6d8597" stroke-width="1.300"/><path d="M9 9h11v11H9z" fill="#a3d4f5"/><path d="M14.500 9v11M9 14.500h11" stroke="#4d6576" stroke-width="1.400"/></svg></div>
      <div class="tool"><svg class="i20" viewBox="0 0 20 20"><path d="M1 2h6v4H1zM14 1v5M11 3.500h7M14 12h5v4h-5z" fill="none" stroke="#666" stroke-width="1.400"/><path d="M2 18h17M3 18L14 7M7 8l6 6" stroke="#4b9fd8" stroke-width="1.400" stroke-dasharray="3 1.500"/><path d="M0 16h4v4H0z" fill="#4d9c4d"/></svg></div>
      <div class="tool"><svg class="i18" viewBox="0 0 18 18"><path d="M1 1h16v16H1zM1 5h16M1 9h16M1 13h16M5 1v16M9 1v16M13 1v16" fill="none" stroke="#999" stroke-width="1.200"/></svg></div>
      <div class="tool"><svg class="i20" viewBox="0 0 20 20"><path d="M0 0h10v10H0z" fill="#dceedb"/><path d="M10 0v20M0 10h20" stroke="#555" stroke-width="1.300" stroke-dasharray="3 1.500"/><path d="M8 8h4v4H8z" fill="#fff" stroke="#555"/></svg></div>
      <div class="tool"><svg class="i20" viewBox="0 0 20 20"><path d="M1.500 14V6l5 8V6" fill="none" stroke="#3c8fcb" stroke-width="2"/><path d="M10 1v19" stroke="#777"/><path d="M12 3q6 0 4 6M13 6l3 4 3-4" fill="none" stroke="#4b9fd8" stroke-width="1.500"/><path d="M10 19l8-9" stroke="#777" stroke-width="1.300"/></svg></div>
      <hr>
      <span class="coords">678,271.45E 7,420,748.17N m</span><svg class="chev" width="12" height="9" viewBox="0 0 12 9"><path d="M1 1.500l5 5 5-5" fill="none" stroke="#555" stroke-width="2.200"/></svg>
      <hr>
      <div class="chosen"><svg class="i20" viewBox="0 0 20 20"><path d="M9 1h10v11h-5M12 1l2 6 5-2" fill="none" stroke="#bbb" stroke-width="1.300"/><circle cx="6.500" cy="10" r="5.500" fill="#eef7fc" stroke="#a9cfe6" stroke-width="1.500"/><path d="M3.500 10h6M6.500 7v6" stroke="#999"/><path d="M10.500 14l5 5" stroke="#e5c39a" stroke-width="2.200"/></svg>Selected Features: 0</div>
      <hr>
      <svg class="pausebtn" width="14" height="18" viewBox="0 0 14 18"><path d="M3 0v18M11 0v18" stroke="#666" stroke-width="4.600"/></svg>
      <hr>
      <svg class="fresh" width="20" height="20" viewBox="0 0 20 20"><path d="M2 9q2-7 9-6 3 0 6 4M18 11q-2 7-9 6-3 0-6-4" fill="none" stroke="#4b9fd8" stroke-width="3"/><path d="M19 1v8h-8zM1 19v-8h8z" fill="#4b9fd8"/></svg>
    </div>
  </section>

  <aside class="pane catalog">
    <div class="title"><h1>Catalog</h1><svg class="drop"><use href="#caret"/></svg><svg class="pin"><use href="#pin"/></svg><svg class="x"><use href="#close"/></svg></div>
    <div class="subtabs"><span class="on">Project</span><span>Portal</span><span>Favorites</span><svg width="19" height="17" viewBox="0 0 19 17"><path d="M2 2h16M2 8.500h16M2 15h16" stroke="#666" stroke-width="3.600" stroke-linecap="round"/></svg></div>
    <div class="find">
      <svg width="22" height="22" viewBox="0 0 22 22"><circle cx="11" cy="11" r="10.200" fill="none" stroke="#c2c2c2" stroke-width="1.300"/><path d="M6 11h11M10.500 6.500L6 11l4.500 4.500" fill="none" stroke="#aaa" stroke-width="1.700"/></svg>
      <div class="home"><svg width="16" height="16" viewBox="0 0 16 16"><path d="M2 8v6h12V8M1 8l7-6 7 6M3 6V2" fill="#eee" stroke="#bbb" stroke-width="1.500"/><path d="M5 8h3v3H5z" fill="#cde"/><path d="M9.500 9h3v5h-3z" fill="#d9b9a4"/><path d="M0 15h16" stroke="#c5dfc2" stroke-width="1.500"/></svg></div>
      <div class="box"><em>Search Project</em><svg class="i14"><use href="#mag"/></svg><svg class="caret pale"><use href="#caret"/></svg></div>
    </div>
    <div class="list">
      <div class="tree">
        <div><svg class="tw"><use href="#closed"/></svg><svg class="ic" viewBox="0 0 21 20"><use href="#folder" width="19" height="16"/><path d="M4.500 6.500h11v11h-11z" fill="#b7d7cf" stroke="#666" stroke-width="1.500"/><path d="M6 15v-4l5-4 3 1-4 5 1 3z" fill="#8dba92"/></svg>Maps</div>
        <div><svg class="tw"><use href="#closed"/></svg><svg class="ic" viewBox="0 0 21 20"><use href="#folder" width="19" height="16"/><use href="#toolbox" x="4" y="6" width="13" height="12"/></svg>Toolboxes</div>
        <div><svg class="tw"><use href="#closed"/></svg><svg class="ic" viewBox="0 0 21 20"><use href="#folder" width="19" height="16"/><use href="#notebook" x="2" y="4" width="15" height="15"/></svg>Notebooks</div>
        <div><svg class="tw"><use href="#closed"/></svg><svg class="ic" viewBox="0 0 21 20"><use href="#folder" width="19" height="16"/><use href="#cyl" x="4" y="7" width="11" height="11"/></svg>Databases</div>
        <div><svg class="tw"><use href="#closed"/></svg><svg class="ic" viewBox="0 0 21 20"><use href="#folder" width="19" height="16"/><ellipse cx="9" cy="11" rx="6" ry="4" fill="#fff" stroke="#777" stroke-width="1.400"/><path d="M10 15l7-8" stroke="#777" stroke-width="2"/><path d="M8 9h1M11 10h1M9 16l2-1" stroke="#b66" stroke-width="1.500"/></svg>Styles</div>
        <div><svg class="tw o"><use href="#open"/></svg><svg class="ic" viewBox="0 0 21 20"><use href="#folder" width="19" height="16"/><path d="M9 8v9l5-5z" fill="#666" stroke="#fff" stroke-width=".7"/></svg>Folders</div>
        <div class="d1"><svg class="tw o"><use href="#open"/></svg><svg class="ic wide" viewBox="0 0 23 20"><use href="#folder" width="19" height="16"/><path d="M11 13v6h10v-6M10 13.500l6-5.500 6 5.500" fill="#fff" stroke="#666" stroke-width="1.400"/><path d="M16.500 14h3v5h-3z" fill="#c8783f"/></svg>arcpy1</div>
        <div class="d2"><svg class="tw"><use href="#closed"/></svg><svg class="ic" viewBox="0 0 21 20"><use href="#folder" width="19" height="16"/></svg>.backups</div>
        <div class="d2"><svg class="tw"><use href="#closed"/></svg><svg class="ic" viewBox="0 0 21 20"><use href="#folder" width="19" height="16"/></svg>.ipynb_checkpoints</div>
        <div class="d2"><svg class="tw"><use href="#closed"/></svg><svg class="ic" viewBox="0 0 21 20"><use href="#folder" width="19" height="16"/></svg>ImportLog</div>
        <div class="d2"><svg class="tw"><use href="#closed"/></svg><svg class="ic" viewBox="0 0 21 20"><use href="#folder" width="19" height="16"/></svg>scripts</div>
        <div class="d2"><svg class="tw o"><use href="#open"/></svg><svg class="ic" viewBox="0 0 21 20"><use href="#cyl" x="2" y="1" width="16" height="16"/></svg>arcpy1.gdb</div>
        <div class="d3"><svg class="ic grey" viewBox="0 0 21 20"><use href="#list" width="20" height="17"/></svg>BufferDistance</div>
        <div class="d3"><svg class="ic" viewBox="0 0 21 20"><use href="#fc" width="20" height="17"/><path d="M5 5h2M13 6h2M8 12h2" stroke="#555" stroke-width="1.800"/></svg>InvasivePlants</div>
        <div class="d3"><svg class="ic" viewBox="0 0 21 20"><use href="#fcpoly" width="20" height="17"/></svg>Lakes</div>
        <div class="d3"><svg class="ic" viewBox="0 0 21 20"><use href="#fcline" width="20" height="17"/></svg>Nationalparks</div>
        <div class="d3 picked"><svg class="ic" viewBox="0 0 21 20"><use href="#fcpoly" width="20" height="17"/></svg>RoadBuffers</div>
        <div class="d3"><svg class="ic" viewBox="0 0 21 20"><use href="#fcline" width="20" height="17"/></svg>Roads</div>
        <div class="d3"><svg class="ic" viewBox="0 0 21 20"><use href="#fcline" width="20" height="17"/></svg>Streams</div>
        <div class="d2"><svg class="tw"><use href="#closed"/></svg><svg class="ic" viewBox="0 0 21 20"><use href="#toolbox" width="20" height="16"/></svg>arcpy1.tbx</div>
        <div class="d2"><svg class="tw"></svg><svg class="ic" viewBox="0 0 21 20"><use href="#notebook" x="1" y="0" width="18" height="19"/></svg>New Notebook.ipynb</div>
        <div class="d1"><svg class="tw"><use href="#closed"/></svg><svg class="ic" viewBox="0 0 21 20"><use href="#folder" width="19" height="16"/></svg>Data</div>
      </div>
      <div class="scroll"><svg width="9" height="6" viewBox="0 0 9 6"><path d="M.8 5l3.700-3.800L8.200 5" fill="none" stroke="#555" stroke-width="1.600"/></svg><div></div><svg width="9" height="6" viewBox="0 0 9 6"><path d="M.8 1l3.700 3.800L8.200 1" fill="none" stroke="#555" stroke-width="1.600"/></svg></div>
    </div>
    <div class="bottom"><span class="on">Catalog</span><span>Label Class</span><span>Symbology</span><span>Geoprocessing</span></div>
  </aside>
</main>
<script src="plants.js"></script>
</body>
</html>
```
FILE: styles.css
```css
* { box-sizing: border-box; }
body {
  margin: 0; width: 1898px; height: 986px; overflow: hidden;
  display: flex; flex-direction: column;
  background: #f1f1f1; color: #4c4c4c;
  font: 14.5px/18px "Open Sans", "Noto Sans", sans-serif; letter-spacing: -.27px;
}
svg { flex: none; display: block; }
.defs { position: absolute; width: 0; height: 0; }
.caret { width: 8px; height: 4px; color: #666; }
.caret.pale { width: 6px; height: 4px; color: #b5b5b5; }
.drop { width: 10px; height: 5px; color: #666; }
.i8 { width: 8px; height: 8px; }
.i14 { width: 14px; height: 14px; }
.i18 { width: 18px; height: 18px; }
.i20 { width: 20px; height: 20px; }
.blue { --head: #69b1e2; }
.grey { --head: #aaa; }
.head { fill: var(--head); }
.glyph { font: 14px "Open Sans", sans-serif; fill: #555; }

/* ribbon tabs */
.tabs { display: flex; height: 43px; border-bottom: 1px solid #bdbdbd; font-size: 15.5px; color: #666; flex: none; }
.tab { display: flex; align-items: center; justify-content: center; padding-top: 12px; }
.tab.project { width: 92px; height: 32px; margin-top: 10px; padding: 2px 3px 0 0; background: #0078d0; color: #fff; }
.tab.active { width: 64px; height: 33px; margin: 10px 0 -1px 7px; padding: 0; background: #f8f8f8; border: 1px solid #bdbdbd; border-bottom: 0; color: #0074c8; }
.w50 { width: 50px; } .w54 { width: 54px; } .w56 { width: 56px; } .w60 { width: 60px; } .w62 { width: 62px; } .w70 { width: 70px; }
.w76 { width: 76px; } .w78 { width: 78px; } .w80 { width: 80px; } .w82 { width: 82px; } .w86 { width: 86px; }
.w88 { width: 88px; } .w92 { width: 92px; } .w97 { width: 97px; } .w100 { width: 100px; } .w116 { width: 116px; }
.context { display: flex; width: 284px; padding-left: 2px; background: #f2e9de; }
.command { display: flex; align-items: center; gap: 12px; width: 250px; height: 30px; margin: 10px 0 0 361px; padding-left: 8px; background: #f7f9f8; font-size: 15px; letter-spacing: 0; color: #888; }
.account { display: flex; align-items: center; height: 30px; margin: 10px 0 0 11px; font-size: 14.5px; letter-spacing: -.07px; color: #4c4c4c; }
.account span { width: 253px; margin-left: 8px; white-space: nowrap; }
.account .caret { margin: 0 13px 0 5px; }
.account .bell { margin-right: 12px; }

/* ribbon */
.ribbon { display: flex; height: 114px; flex: none; background: #f8f8f8; border-bottom: 1px solid #bdbdbd; }
.group { display: flex; flex-direction: column; position: relative; flex: none; }
.group::after { content: ""; position: absolute; right: 0; top: 5px; width: 1px; height: 103px; background: #d2d2d2; }
.body { display: flex; height: 91px; }
.group footer { display: flex; justify-content: center; padding-top: 1px; font-size: 13.3px; line-height: 21px; position: relative; }
.launch { position: absolute; right: 9px; top: 6px; width: 9px; height: 9px; }
.clipboard { width: 152px; } .clipboard footer { padding-right: 10px; }
.navigate { width: 254px; } .navigate footer { padding-right: 20px; }
.layer { width: 293px; } .layer footer { padding-right: 2px; }
.selection { width: 299px; } .selection footer { padding-right: 23px; }
.inquiry { width: 300px; } .inquiry footer { padding-right: 3px; }
.labeling { width: 207px; } .labeling footer { padding-right: 24px; }
.offline { width: 178px; } .offline footer { padding-right: 23px; }
.big { display: flex; flex-direction: column; align-items: center; padding-top: 6px; text-align: center; line-height: 17px; flex: none; }
.big > svg:first-child { height: 40px; }
.big b { font-weight: 400; margin-top: 5px; white-space: nowrap; }
.big > .caret { margin-top: 7px; }
b .caret { display: inline-block; vertical-align: 3px; }
.clipboard .big { width: 44px; }
.selected { width: 58px; height: 85px; margin: 2px 0 0 5px; padding-top: 4px; background: #b9d2e7; }
.navgrid { display: grid; grid-template-columns: 20px 20px; gap: 8px 7px; padding: 7px 0 0 4px; width: 56px; align-content: start; }
.layer .big:first-child { margin-left: 4px; }
.selection .big:first-child { margin-left: 2px; }
.inquiry .big:first-child { margin-left: 7px; }
.offline .big { margin-left: 5px; }
.rows { display: flex; flex-direction: column; padding-top: 4px; white-space: nowrap; }
.rows > div { display: flex; align-items: center; gap: 6px; height: 28px; }
.rows > div:last-child:nth-child(3) { height: 30px; }
.clipboard .rows { padding-left: 6px; } .clipboard .rows > div { gap: 5px; }
.layer .rows { padding-left: 5px; } .layer .rows > div { gap: 5px; }
.labeling .rows { padding-left: 9px; width: 140px; }
.pause { width: 40px; }
.offline .rows { padding-left: 5px; }
.dim { color: #9a9a9a; }
.dim .caret { color: #999; }

/* panes */
main { display: flex; height: 829px; flex: none; }
.pane { display: flex; flex-direction: column; height: 817px; margin-top: 7px; background: #f7f9f8; border: 1px solid #d6d6d6; border-top: 6px solid #cacaca; }
.contents { width: 405px; margin-left: 2px; flex: none; }
.title { display: flex; align-items: flex-start; height: 42px; }
h1 { margin: 2px auto 0 6px; font: 18.500px/26px "Open Sans", "Noto Sans", sans-serif; letter-spacing: -.1px; color: #666; }
.title .drop { margin: 11px 9px 0 0; }
.title .pin { width: 10px; height: 13px; margin: 4px 10px 0 0; }
.title .x { width: 11px; height: 11px; margin: 6px 8px 0 0; color: #666; }
.find { display: flex; align-items: center; gap: 10px; height: 30px; margin: 2px 4px 0 5px; }
.box { display: flex; align-items: center; flex: 1; height: 30px; padding: 0 8px 0 6px; background: #fff; border: 1px solid #8a8a8a; }
.box em { flex: 1; color: #444; padding-top: 1px; }
.box .caret { margin-left: 11px; }
.views { display: flex; width: 240px; height: 53px; margin-left: 20px; border-bottom: 2px solid #c4c4c4; }
.views div { width: 40px; display: flex; justify-content: center; align-items: center; }
.views .on { border-bottom: 4px solid #0078c8; margin-bottom: -2px; padding-top: 4px; }
h2 { margin: 16px 0 0 20px; font: 600 16.500px/22px "Open Sans", "Noto Sans", sans-serif; letter-spacing: -.2px; }
.toc { padding-top: 6px; letter-spacing: -.22px; }
.toc > div { display: flex; align-items: center; white-space: nowrap; }
.toc .loose { letter-spacing: -.02px; }
.l0 { padding-left: 3px; gap: 7px; } .l0 .i8 { margin-top: -2px; }
.l1 { height: 30px; padding-left: 17px; position: relative; }
.l1 .i8 { margin: -2px 7px 0 0; z-index: 1; } .l1 u { width: 15px; }
.l1 i { width: 18px; height: 18px; margin-right: 6px; padding: 2px; border: 1px solid #858585; background: #fff; flex: none; }
.l1 i svg { width: 12px; height: 12px; }
.l2 { height: 32px; padding-left: 31px; gap: 9px; }
.sym { padding-left: 36px; } .sym span { margin-left: 7px; }
.h32 { height: 32px; } .h28 { height: 28px; } .h24 { height: 24px; } .h26 { height: 26px; }
.s1 { height: 22px; margin-bottom: 6px; } .s1 svg { margin-left: -3px; }
.s2 { height: 24px; margin-bottom: 5px; }
.s3 { height: 26px; margin-bottom: 5px; } .s4 { height: 24px; margin-bottom: 6px; }
.gap3 { margin-top: 3px; }
.toc .picked { background: linear-gradient(#c5daee, #c5daee) 31px 0 / 371px 30px no-repeat; }
.toc .picked::after { content: ""; position: absolute; left: 30px; right: 1px; top: 0; bottom: 0; border: 1px solid #0079c1; }
.semi { font-weight: 600; }

/* map view */
.view { width: 1098px; margin: 8px 0 0 8px; flex: none; border-left: 1px solid #d0d0d0; }
nav { display: flex; height: 27px; margin-left: -1px; border-bottom: 3px solid #0078d0; align-items: center; }
.doc { display: flex; align-items: center; height: 27px; padding-left: 11px; gap: 6px; margin-bottom: -3px; letter-spacing: .1px; }
.doc.on { width: 92px; background: #0078d0; color: #fff; padding-left: 8px; gap: 8px; }
.doc.on .x { width: 11px; height: 11px; margin-left: 2px; }
nav .drop { margin: 0 4px 0 auto; }
.map { background: #fff; }
.buffer use, .streams path, .parks path, .roads use { fill: none; stroke-linejoin: round; stroke-linecap: round; }
.edge { stroke: #636b7c; stroke-width: 22; } .edge.wide { stroke-width: 28; }
.buffer .fill { stroke: #a0c3ff; stroke-width: 19.500; } .buffer .fill.wide { stroke-width: 25.500; }
.lakes { fill: #bee8ff; mix-blend-mode: multiply; }
.lakes .specks { fill: none; stroke: #bee8ff; stroke-width: 6; stroke-linecap: round; }
.streams path { stroke: #73b2ff; stroke-width: 4.500; }
.parks path { stroke: #a8cf61; stroke-width: 7; }
.roads .casing { stroke: #c9cbae; stroke-width: 5.200; } .roads .core { stroke: #fff; stroke-width: 3.800; }
.roads .casing.main { stroke: #f5a27f; } .roads .core.main { stroke: #ffe0cc; stroke-width: 3.400; }
#plants rect { fill: #98e600; stroke: #7aa83a; }
#plants text { font: 12.500px "DejaVu Sans Condensed", "DejaVu Sans", sans-serif; letter-spacing: -.6px; fill: #4e5a4a; text-anchor: middle; }
.status { display: flex; align-items: center; height: 31px; background: #f7f9f8; border-bottom: 1px solid #d9d9d9; padding-left: 6px; }
.status hr { width: 1px; height: 20px; margin: 0 5px; border: 0; background: #999; }
.scale { display: flex; align-items: center; justify-content: space-between; width: 125px; height: 28px; padding: 0 5px 0 5px; background: #fff; border: 1px solid #999; }
.scale .caret { width: 6px; }
.tool { width: 28px; height: 26px; display: flex; align-items: center; justify-content: center; }
.tool.on { background: #a3d4f5; width: 27px; }
.coords { width: 193px; margin: 2px 0 0 168px; white-space: nowrap; }
.chev { margin: 2px 168px 0 12px; }
.chosen { display: flex; align-items: center; gap: 5px; width: 165px; padding-left: 3px; color: #9a9a9a; white-space: nowrap; letter-spacing: -.2px; }
.pausebtn { margin: 0 6px 0 3px; } .fresh { margin-left: 4px; }

/* catalog */
.catalog { width: 378px; margin-left: 8px; border-right: 0; flex: none; }
.catalog .title .x { margin-right: -1px; }
.subtabs { display: flex; gap: 12px; height: 27px; margin: 0 2px 0 7px; font-size: 15px; }
.subtabs span { height: 27px; line-height: 24px; border-bottom: 2px solid transparent; }
.subtabs .on { font-weight: 600; border-color: #0079c1; width: 52px; letter-spacing: -.7px; }
.subtabs svg { margin: 5px 0 0 auto; }
.catalog .find { margin: 12px -1px 0 6px; gap: 0; }
.home { display: flex; align-items: center; justify-content: center; width: 25px; height: 31px; margin-left: 6px; border: 1px solid #d2d2d2; border-right: 0; }
.list { display: flex; height: 667px; margin-top: 6px; }
.tree { width: 357px; padding-top: 2px; overflow: hidden; }
.tree > div { display: flex; align-items: center; height: 30px; padding-left: 16px; }
.tw { width: 7px; height: 12px; margin: -2px 9px 0 0; } .tw.o { width: 8px; height: 8px; margin: -2px 11px 0 -3px; }
.ic { width: 21px; height: 20px; margin-right: 9px; } .ic.wide { width: 23px; margin-right: 7px; }
.tree .d1 { padding-left: 36px; } .tree .d2 { padding-left: 56px; } .tree .d3 { margin-left: 87px; padding-left: 5px; }
.tree .picked { background: #cacaca; box-shadow: inset 0 0 0 1px #929292; }
.scroll { display: flex; flex-direction: column; align-items: center; justify-content: space-between; width: 20px; padding: 7px 0 6px; background: #e9e9e9; }
.scroll div { width: 11px; height: 599px; margin-bottom: 30px; border-radius: 6px; background: #b2b2b2; margin-top: 8px; flex: none; }
.bottom { display: flex; height: 25px; margin-left: -1px; background: #f1f1f1; border-top: 1px solid #d9d9d9; font-size: 15px; letter-spacing: -.3px; }
.bottom span { padding: 2px 8px 0; line-height: 22px; }
.bottom .on { margin-top: -1px; padding: 2px 6px 0 7px; background: #f7f9f8; color: #0074c8; border: 1px solid #d0d0d0; border-top: 0; }
```
FILE: plants.js
```js
// Survey plots per map sheet: sheet origin in pixels, plots in thirds of a pixel.
const sheets = [
  [440, 320, [[50,508,122],[49,553,166],[4,726,394],[52,546,488],[51,669,507],[3,914,504],[2,816,574],[1,658,673],[5,158,701],[53,793,742],[54,858,727],['',883,719],['',888,755],[7,339,922],[6,300,982],[8,551,1023],[11,1123,939],[12,1127,1069],[46,691,1196],[47,841,1187],['',884,1200],[45,903,1269],[44,727,1278],[23,1093,361],[22,1058,413]]],
  [760, 220, [[19,371,312],[18,273,352],[17,283,417],[20,501,413],[21,611,422],[25,255,575],[24,229,643],[26,482,668],[27,570,711],[28,660,781],['',647,882],[29,607,913],[16,1178,906],[15,1107,972],[14,1286,966]]],
  [760, 530, [[10,426,318],[31,631,301],[32,711,283],[34,836,384],[33,693,420],[9,406,487],[13,498,720],[39,558,800],[36,608,800],[35,619,882],[37,719,869],['',748,857]]]
];
let out = '';
for (const [ox, oy, plots] of sheets) {
  for (const [name, px, py] of plots) {
    const x = Math.round(ox + px / 3), y = Math.round(oy + py / 3);
    out += `<rect x="${x - 4.5}" y="${y - 4.5}" width="10" height="10"/><text x="${x}" y="${y + 5}">${name}</text>`;
  }
}
document.getElementById('plants').innerHTML = out;
```
